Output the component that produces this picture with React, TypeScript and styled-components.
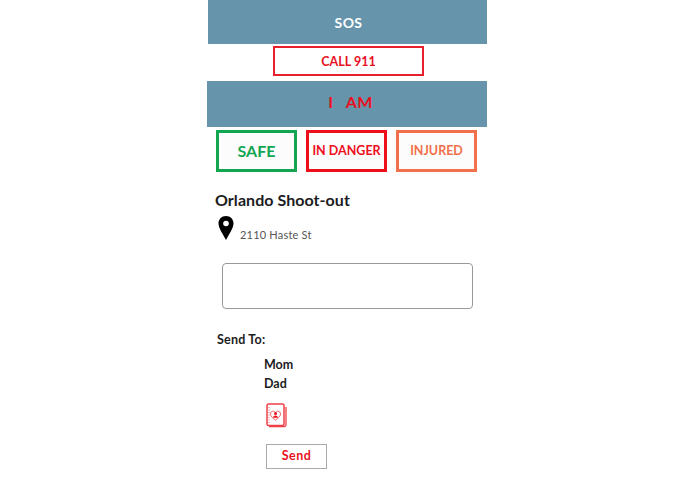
import React from 'react';
import styled, { createGlobalStyle } from 'styled-components';

const GlobalStyle = createGlobalStyle`
  html, body {
    margin: 0;
    padding: 0;
    background: #ffffff;
    font-family: 'Lato', 'Liberation Sans', sans-serif;
  }
`;

const Screen = styled.div`
  width: 280px;
  margin-left: 207px;
  display: flex;
  flex-direction: column;
`;

const Banner = styled.div<{ $height: number; $color: string; $size: number; $inset: number }>`
  height: ${(p) => p.$height}px;
  box-sizing: border-box;
  padding: 0 0 ${(p) => p.$inset}px ${(p) => 2 + p.$inset}px;
  background: #6694ab;
  color: ${(p) => p.$color};
  font-size: ${(p) => p.$size}px;
  font-weight: 700;
  letter-spacing: 0.4px;
  display: flex;
  align-items: center;
  justify-content: center;
  white-space: pre;
`;

const TopBanner = styled(Banner)`
  margin-left: 1px;
`;

const CallRow = styled.div`
  height: 37px;
  display: flex;
  justify-content: center;
  align-items: flex-start;
  padding: 2px 0 0 3px;
  box-sizing: border-box;
`;

const CallButton = styled.button`
  width: 151px;
  height: 30px;
  border: 2px solid #e8202c;
  background: #fff;
  color: #e8101e;
  font: 700 12.5px 'Lato', sans-serif;
  padding: 0;
`;

const StatusRow = styled.div`
  display: flex;
  gap: 9px;
  padding: 3px 0 0 9px;
`;

const StatusButton = styled.button<{ $color: string; $size: number }>`
  width: 81px;
  height: 42px;
  box-sizing: border-box;
  border: 3px solid ${(p) => p.$color};
  background: #fcfcfc;
  color: ${(p) => p.$color};
  font: 700 ${(p) => p.$size}px 'Lato', sans-serif;
  padding: 0 0 2px;
  white-space: nowrap;
`;

const Title = styled.h1`
  margin: 19px 0 0 8px;
  font-size: 16px;
  line-height: 18px;
  font-weight: 700;
  letter-spacing: 0.05px;
  color: #1c1c22;
`;

const AddressRow = styled.div`
  display: flex;
  align-items: flex-start;
  gap: 6px;
  margin: 7px 0 0 11px;
`;

const AddressText = styled.span`
  margin-top: 12px;
  font-size: 11px;
  line-height: 14px;
  letter-spacing: 0.2px;
  color: #555;
`;

const Message = styled.textarea`
  display: block;
  width: 251px;
  height: 46px;
  box-sizing: border-box;
  margin: 21px 0 0 15px;
  border: 1px solid #999;
  border-radius: 4px;
  background: #fff;
  resize: none;
  outline: none;
`;

const SendTo = styled.div`
  margin: 23px 0 0 10px;
  font-size: 12.5px;
  line-height: 16px;
  font-weight: 700;
  letter-spacing: 0.2px;
  color: #1c1c22;
`;

const Contacts = styled.div`
  margin: 9px 0 0 57px;
  display: flex;
  flex-direction: column;
  gap: 3px;
`;

const Contact = styled.div`
  font-size: 12.5px;
  line-height: 16px;
  font-weight: 700;
  color: #1c1c22;
`;

const BookWrap = styled.div`
  margin: 11px 0 0 59px;
  height: 26px;
`;

const SendButton = styled.button`
  display: block;
  margin: 15px 0 0 59px;
  width: 61px;
  height: 25px;
  box-sizing: border-box;
  border: 1px solid #aaa;
  background: #fff;
  color: #e8101e;
  font: 700 12.5px 'Lato', sans-serif;
  letter-spacing: 0.5px;
  padding: 0 0 2px;
`;

const PinIcon = () => (
  <svg width="16" height="24" viewBox="0 0 16 24">
    <path
      d="M8 0C3.6 0 .5 3.2.5 7.4c0 4.6 4.6 11 7.5 16.6 2.900-5.600 7.500-12 7.500-16.600C15.500 3.200 12.400 0 8 0z"
      fill="#000"
    />
    <circle cx="8" cy="7.500" r="2.800" fill="#fff" />
  </svg>
);

const BookIcon = () => (
  <svg width="21" height="25" viewBox="0 0 21 25" fill="none" stroke="#ee4048">
    <path d="M3 23.500h15.500a1.500 1.500 0 0 0 1.500-1.500V4" strokeWidth="1.300" />
    <rect x="1" y="1" width="17" height="21.500" rx="1.500" strokeWidth="1.500" />
    <path d="M3 4v16" strokeWidth="0.800" strokeDasharray="1 1.500" />
    <path
      d="M9.500 17c-3-2-5-3.700-5-6 0-1.700 1.200-2.800 2.600-2.800 1 0 1.900.6 2.400 1.500.5-.9 1.400-1.500 2.400-1.500 1.400 0 2.600 1.100 2.600 2.800 0 2.300-2 4-5 6z"
      strokeWidth="0.800"
    />
    <circle cx="9.500" cy="10.500" r="1.500" fill="#e8101e" stroke="none" />
    <path d="M7 14.800c.3-1.300 1.200-2.200 2.500-2.200s2.200.9 2.500 2.200z" fill="#e8101e" stroke="none" />
  </svg>
);

export default function App() {
  return (
    <>
      <GlobalStyle />
      <Screen>
        <TopBanner $height={44} $color="#ffffff" $size={14} $inset={0}>SOS</TopBanner>
        <CallRow>
          <CallButton>CALL 911</CallButton>
        </CallRow>
        <Banner $height={46} $color="#e8101e" $size={16} $inset={5}>{'I   AM'}</Banner>
        <StatusRow>
          <StatusButton $color="#12a650" $size={16}>SAFE</StatusButton>
          <StatusButton $color="#ee0f1c" $size={12.5}>IN DANGER</StatusButton>
          <StatusButton $color="#f2704a" $size={12.5}>INJURED</StatusButton>
        </StatusRow>
        <Title>Orlando Shoot-out</Title>
        <AddressRow>
          <PinIcon />
          <AddressText>2110 Haste St</AddressText>
        </AddressRow>
        <Message />
        <SendTo>Send To:</SendTo>
        <Contacts>
          <Contact>Mom</Contact>
          <Contact>Dad</Contact>
        </Contacts>
        <BookWrap>
          <BookIcon />
        </BookWrap>
        <SendButton>Send</SendButton>
      </Screen>
    </>
  );
}
